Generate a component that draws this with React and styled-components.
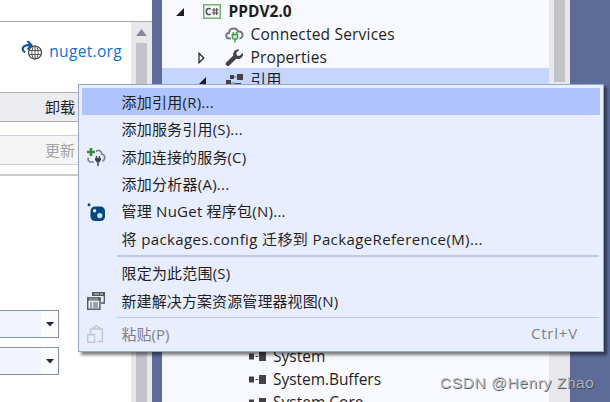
import React from 'react'
import styled, { createGlobalStyle } from 'styled-components'

const GlobalStyle = createGlobalStyle`
  * {
    box-sizing: border-box;
  }
  body {
    margin: 0;
    overflow: hidden;
    font-family: 'Open Sans', 'Noto Sans CJK SC', sans-serif;
    font-size: 15px;
    color: #1e1e1e;
  }
`

const Window = styled.div`
  position: relative;
  display: flex;
  width: 610px;
  height: 402px;
  overflow: hidden;
  background: #5d6b99;
`

/* package manager, left side */
const PackagePane = styled.div`
  display: flex;
  flex-direction: column;
  width: 152px;
  margin-right: 10px;
  background: #fff;
`
const PaneTop = styled.div`
  height: 22px;
  flex: none;
  border-bottom: 1px solid #a9a9ad;
`
const PaneBody = styled.div`
  display: flex;
  flex: 1;
`
const PaneContent = styled.div`
  flex: 1;
`
const SourceRow = styled.div`
  display: flex;
  align-items: center;
  justify-content: flex-end;
  gap: 7px;
  height: 70px;
  padding: 0 9px 12px 0;
`
const SourceLink = styled.a`
  color: #0e70d1;
  font-size: 15.5px;
  letter-spacing: 0.33px;
`
const PaneButton = styled.div`
  display: flex;
  align-items: center;
  justify-content: flex-end;
  height: 30px;
  margin-bottom: 13px;
  padding: 0 56px 1px 0;
  border-top: 1px solid ${p => (p.$disabled ? '#cccedb' : '#acacac')};
  border-bottom: 1px solid ${p => (p.$disabled ? '#cccedb' : '#acacac')};
  background: ${p => (p.$disabled ? '#f5f5f5' : '#ececf0')};
  color: ${p => (p.$disabled ? '#a2a4a5' : '#1e1e1e')};
`
const PaneDivider = styled.div`
  height: 2px;
  margin: -4px 0 134px;
  background: #cbcbcd;
`
const Combo = styled.div`
  display: flex;
  width: 59px;
  height: 28px;
  margin-bottom: 9px;
  border: 1px solid #8591a2;
  border-left: 0;
  background: #f2f4ff;
`
const ComboArrow = styled.div`
  display: flex;
  align-items: center;
  justify-content: center;
  width: 17px;
  margin-left: auto;
  background: #fcfcfc;
`
const ScrollBar = styled.div`
  display: flex;
  flex-direction: column;
  align-items: center;
  width: 21px;
  padding: ${p => (p.$arrow ? '7px 0 0' : '0')};
  background: #e8e8ec;
`
const Thumb = styled.div`
  width: 11px;
  height: ${p => p.$height};
  margin-top: ${p => p.$top || 0}px;
  background: #c2c3c9;
`

/* solution explorer */
const TreePane = styled.div`
  display: flex;
  width: 408px;
  background: #f7f9fe;
`
const Tree = styled.div`
  flex: 1;
  margin-top: -1px;
  font-size: 15.5px;
`
const TreeRow = styled.div`
  display: flex;
  align-items: center;
  height: 23px;
  padding-top: 2px;
  padding-left: ${p => p.$indent}px;
  background: ${p => (p.$selected ? '#c4d5ff' : 'transparent')};
  font-weight: ${p => (p.$bold ? 700 : 400)};
  letter-spacing: ${p => p.$spacing || 0}px;
  line-height: 21px;
  white-space: nowrap;
`
const Twisty = styled.span`
  display: flex;
  width: 27px;
  flex: none;
`
const NodeIcon = styled.span`
  display: flex;
  width: 25.5px;
  flex: none;
`
const CollapsedRows = styled.div`
  height: 253px;
`

/* context menu */
const Menu = styled.div`
  position: absolute;
  left: 78px;
  top: 84px;
  width: 526px;
  height: 268px;
  padding: 3px;
  border: 1px solid #94a6d0;
  background: #e8eeff;
  box-shadow: 3px 3px 3px rgba(0, 0, 0, 0.5);
  clip-path: inset(0 -8px -8px 0);
`
const MenuItem = styled.div`
  display: flex;
  align-items: center;
  height: 27.4px;
  background: ${p => (p.$active ? '#b0c5ff' : 'transparent')};
  color: ${p => (p.$disabled ? '#7f8084' : '#1e1e1e')};
`
const MenuIcon = styled.span`
  display: flex;
  width: 39.5px;
  flex: none;
  padding: 1px 0 0 5px;
`
const MenuLabel = styled.span`
  padding-bottom: 0.8px;
  white-space: nowrap;
  letter-spacing: ${p => p.$spacing || 0}px;
`
const Shortcut = styled.span`
  margin-left: auto;
  padding: 0 22px 1px 0;
  letter-spacing: 0.8px;
`
const Separator = styled.div`
  height: ${p => p.$thick || 1}px;
  margin: ${p => p.$margin} 1px ${p => p.$margin} 35px;
  background: #bcc8e8;
`

const Watermark = styled.div`
  position: absolute;
  left: 440px;
  top: 372px;
  font: 15.5px/22px 'Liberation Sans', sans-serif;
  letter-spacing: 0.6px;
  white-space: nowrap;
  color: rgba(190, 192, 197, 0.9);
  text-shadow: 0.6px 0.6px 0.6px rgba(50, 50, 55, 0.8);
`

const SourceIcon = () => (
  <svg width="21" height="20" viewBox="0 0 21 20" fill="none">
    <path d="M4 11.500C-.5 8 2 3.500 9 4.200" stroke="#12599c" strokeWidth="2.200" />
    <path d="M5.500 0h2.500l4 4.200-4 4.300H5.500L8 5V3.500z" fill="#12599c" />
    <circle cx="14" cy="11.500" r="6.500" stroke="#424242" strokeWidth="1.200" fill="#fff" />
    <ellipse cx="14" cy="11.500" rx="3.200" ry="6.500" stroke="#555" />
    <path d="M14 5v13M8 9.500h12M8 13.500h12" stroke="#555" />
  </svg>
)

const CSharpIcon = () => (
  <svg width="18" height="15" viewBox="0 0 18 15" fill="none">
    <rect x=".75" y=".75" width="16.500" height="13.500" stroke="#7aae79" strokeWidth="1.500" fill="#f4f5f6" />
    <path d="M7.700 5.200C5.500 3.500 3.300 5 3.300 7.500s2.200 4 4.400 2.300" stroke="#555" strokeWidth="1.600" />
    <path d="M11 4v7M13.600 4v7M9.200 6h6.200M9.200 9h6.200" stroke="#555" strokeWidth="1.200" />
  </svg>
)

const CloudIcon = () => (
  <svg width="19" height="16" viewBox="0 0 19 16" fill="none">
    <path d="M6 11.500H4.500C.2 11.500.2 6.300 4 6c.2-5.600 7.500-6 9-1.500 5.400-.7 6.200 6.400 1.500 7" stroke="#777" strokeWidth="2" />
    <path d="M8.400 5v3M11.600 5v3M10 12v3.500" stroke="#389b43" strokeWidth="1.400" />
    <path d="M7.300 7.500h5.400V10c0 3-5.400 3-5.400 0z" stroke="#389b43" strokeWidth="1.300" fill="#c8e4ca" />
  </svg>
)

const WrenchIcon = () => (
  <svg width="19" height="18" viewBox="0 0 19 18">
    <path d="M17.800 3.800 14.500 7l-2.700-.6-.5-2.600L14.400.7C11 .1 7.700 2.500 8.300 6.500L1.200 13.400c-1.800 2 1 4.900 3.100 3.100l7-6.700c4.400.8 7.500-2.400 6.500-6z" fill="#424242" />
  </svg>
)

const ReferencesIcon = () => (
  <svg width="19" height="16" viewBox="0 0 19 16" fill="#424242">
    <path d="M5 2h4v4H5zM12 1h6v6h-6zM1 7h5v5H1zM10 10h6v5h-6z" />
    <path d="M9 4h3M6 10h4" stroke="#777" />
  </svg>
)

const AssemblyIcon = () => (
  <svg width="19" height="9" viewBox="0 0 19 9" fill="#424242">
    <path d="M1 1.500h5v6H1zM11 0h7v9h-7zM7.500 4h2.500v1H7.500z" />
  </svg>
)

const ExpandedArrow = () => (
  <svg width="8" height="8" viewBox="0 0 8 8"><path d="M8 0v8H0z" fill="#1e1e1e" /></svg>
)

const ClosedArrow = () => (
  <svg width="7" height="12" viewBox="0 0 7 12"><path d="M1 1.300 5.800 6 1 10.700z" fill="none" stroke="#1e1e1e" strokeWidth="1.200" /></svg>
)

const DropArrow = () => (
  <svg width="8" height="5" viewBox="0 0 8 5"><path d="M0 0h8L4 4.500z" fill="#1b293e" /></svg>
)

const AddServiceIcon = () => (
  <svg width="19" height="18" viewBox="0 0 19 18" fill="none">
    <path d="M4 0v8M0 4h8" stroke="#388a34" strokeWidth="2.600" />
    <path d="M1.500 9.500c-1.200 2.500.3 4.500 3 4.500H7M9 3.500c3-2.300 5.500-.5 5.700 2.500 4.300 1 3.700 6 .5 7" stroke="#858589" strokeWidth="1.700" />
    <path d="M9.500 8v3M12.500 8v3M11 12v6" stroke="#424242" strokeWidth="1.400" />
    <path d="M8 10h6v2L12.300 14.300H9.700L8 12z" fill="#424242" />
  </svg>
)

const NuGetIcon = () => (
  <svg width="18" height="18" viewBox="0 0 18 18">
    <circle cx="2" cy="1.800" r="1.500" fill="#004880" />
    <rect x="3.500" y="3.500" width="14.500" height="14.500" rx="4.500" fill="#004880" />
    <circle cx="7.600" cy="7.800" r="1.700" fill="#e8eeff" />
    <circle cx="12.800" cy="12.600" r="2.600" fill="#d5e2f5" />
  </svg>
)

const NewViewIcon = () => (
  <svg width="18" height="18" viewBox="0 0 18 18" fill="none">
    <path d="M5.700 4V1h11.600v10H14" stroke="#555" strokeWidth="1.300" />
    <path d="M5 0h13v4H5z" fill="#555" />
    <path d="M7 2h9" stroke="#d8dced" strokeDasharray="5 1" />
    <rect x=".7" y="6" width="12.200" height="11.200" stroke="#555" strokeWidth="1.400" fill="#e8eeff" />
    <path d="M0 5.500h13.600v3H0z" fill="#555" />
    <path d="M2 7h9" stroke="#b9bdcb" />
    <path d="M3 11h2M6 11h5M3 13h2M6 13h5M3 15h2M6 15h5" stroke="#555" />
  </svg>
)

const PasteIcon = () => (
  <svg width="17" height="18" viewBox="0 0 17 18" fill="none" stroke="#c3c6d1" strokeWidth="1.500">
    <path d="M3.500 9V4h11.800v12.500H10M6 4.500V3h1.500c.2-2.700 3.700-2.700 4 0H13v1.500" />
    <path d="M.8 9.800h6.700v7.400H.8z" fill="#edf0fa" />
  </svg>
)

const mainItems = [
  { label: '添加引用(R)...', active: true, spacing: 0.25 },
  { label: '添加服务引用(S)...', spacing: 0.2 },
  { label: '添加连接的服务(C)', icon: <AddServiceIcon />, spacing: 0.15 },
  { label: '添加分析器(A)...', spacing: 0.25 },
  { label: '管理 NuGet 程序包(N)...', icon: <NuGetIcon />, spacing: 0.24 },
  { label: '将 packages.config 迁移到 PackageReference(M)...', spacing: 0.38 },
]

const viewItems = [
  { label: '限定为此范围(S)', spacing: 0.2 },
  { label: '新建解决方案资源管理器视图(N)', icon: <NewViewIcon />, spacing: 0.1 },
]

const assemblies = [
  { name: 'System' },
  { name: 'System.Buffers', spacing: -0.05 },
  { name: 'System.Core' },
]

const renderItem = (item) => (
  <MenuItem key={item.label} $active={item.active} $disabled={item.disabled}>
    <MenuIcon>{item.icon}</MenuIcon>
    <MenuLabel $spacing={item.spacing}>{item.label}</MenuLabel>
    {item.shortcut && <Shortcut>{item.shortcut}</Shortcut>}
  </MenuItem>
)

const App = () => {
  return (
    <Window>
      <GlobalStyle />
      <PackagePane>
        <PaneTop />
        <PaneBody>
          <PaneContent>
            <SourceRow>
              <SourceIcon />
              <SourceLink>nuget.org</SourceLink>
            </SourceRow>
            <PaneButton>卸载</PaneButton>
            <PaneButton $disabled>更新</PaneButton>
            <PaneDivider />
            <Combo><ComboArrow><DropArrow /></ComboArrow></Combo>
            <Combo><ComboArrow><DropArrow /></ComboArrow></Combo>
          </PaneContent>
          <ScrollBar $arrow>
            <svg width="11" height="7" viewBox="0 0 11 7"><path d="M5.500 0 11 7H0z" fill="#868999" /></svg>
            <Thumb $top={7} $height="360px" />
          </ScrollBar>
        </PaneBody>
      </PackagePane>

      <TreePane>
        <Tree>
          <TreeRow $indent={14} $bold>
            <Twisty><ExpandedArrow /></Twisty>
            <NodeIcon><CSharpIcon /></NodeIcon>
            PPDV2.0
          </TreeRow>
          <TreeRow $indent={63} $spacing={0.2}>
            <NodeIcon><CloudIcon /></NodeIcon>
            Connected Services
          </TreeRow>
          <TreeRow $indent={36} $spacing={0.15}>
            <Twisty><ClosedArrow /></Twisty>
            <NodeIcon><WrenchIcon /></NodeIcon>
            Properties
          </TreeRow>
          <TreeRow $indent={36} $selected>
            <Twisty><ExpandedArrow /></Twisty>
            <NodeIcon><ReferencesIcon /></NodeIcon>
            引用
          </TreeRow>
          <CollapsedRows />
          {assemblies.map((item) => (
            <TreeRow key={item.name} $indent={85.5} $spacing={item.spacing}>
              <NodeIcon><AssemblyIcon /></NodeIcon>
              {item.name}
            </TreeRow>
          ))}
        </Tree>
        <ScrollBar>
          <Thumb $height="82px" />
        </ScrollBar>
      </TreePane>

      <Menu>
        {mainItems.map(renderItem)}
        <Separator $thick={2} $margin="2.5px" />
        {viewItems.map(renderItem)}
        <Separator $margin="2.5px" />
        {renderItem({ label: '粘贴(P)', icon: <PasteIcon />, shortcut: 'Ctrl+V', disabled: true })}
      </Menu>
      <Watermark>CSDN @Henry Zhao</Watermark>
    </Window>
  )
}

export default App
